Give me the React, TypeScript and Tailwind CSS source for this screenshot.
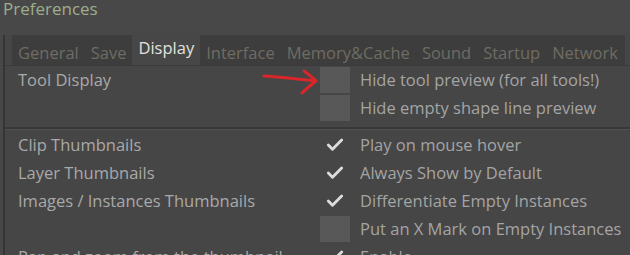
import { Check } from 'lucide-react';

const tabs = ['General', 'Save', 'Display', 'Interface', 'Memory&Cache', 'Sound', 'Startup', 'Network'];

function Box() {
  return <div className="h-[26px] w-[30px] bg-[#585858]" />;
}

function Tick() {
  return (
    <div className="flex h-[26px] w-[30px] items-center justify-center">
      <Check size={20} strokeWidth={3.4} className="text-[#dcdcdc]" />
    </div>
  );
}

function Row({ left, mark, label }: { left?: string; mark: 'box' | 'tick'; label: string }) {
  return (
    <div className="flex h-[28px] items-center">
      <div className="w-[315px] shrink-0 pl-[13px] text-[#a9a9a9]">{left}</div>
      {mark === 'box' ? <Box /> : <Tick />}
      <div className="pl-[10px] text-[#a4a4a4]">{label}</div>
    </div>
  );
}

export default function App() {
  return (
    <div className="relative h-[255px] w-[630px] overflow-hidden bg-[#484848] text-[16.5px] leading-none whitespace-nowrap font-['Open_Sans',sans-serif]">
      <div className="h-[35px] pl-[3px] text-[17px] leading-[17px] text-[#9fad8c]">Preferences</div>

      <div className="ml-[3px] border-l-2 border-[#353535] bg-[#464646]">
        {/* tab strip */}
        <div className="ml-[7px] mr-[5px] flex h-[30px] items-end bg-[#3d3d3d]">
          {tabs.map((t) =>
            t === 'Display' ? (
              <div key={t} className="-mt-[3px] flex h-[33px] items-center self-end bg-[#474747] px-[6px] pb-[1px] text-[#e2e2de]">
                {t}
              </div>
            ) : (
              <div key={t} className="flex h-[30px] items-center px-[6px] pt-[7px] text-[#6f6c63]">
                {t}
              </div>
            ),
          )}
        </div>
        <div className="h-px bg-[#3a3a3a]" />

        {/* tool display */}
        <div className="pb-[5px]">
          <div className="relative">
            <Row left="Tool Display" mark="box" label="Hide tool preview (for all tools!)" />
            <svg className="absolute left-[255px] top-[2px]" width="60" height="28" viewBox="0 0 60 28">
              <path d="M4 8 C20 9 38 11 55 13" stroke="#d8262a" strokeWidth="3" fill="none" strokeLinecap="round" />
              <path d="M44 3 C48 6 52 9 56 13 C51 17 46 21 42 25" stroke="#d8262a" strokeWidth="3" fill="none" strokeLinecap="round" strokeLinejoin="round" />
            </svg>
          </div>
          <Row mark="box" label="Hide empty shape line preview" />
        </div>

        <div className="h-[2px] bg-[#383838]" />
        <div className="h-px bg-[#505050]" />

        <div className="pt-px">
          <Row left="Clip Thumbnails" mark="tick" label="Play on mouse hover" />
          <Row left="Layer Thumbnails" mark="tick" label="Always Show by Default" />
          <Row left="Images / Instances Thumbnails" mark="tick" label="Differentiate Empty Instances" />
          <Row mark="box" label="Put an X Mark on Empty Instances" />
          <Row left="Pan and zoom from the thumbnail" mark="tick" label="Enable" />
        </div>
      </div>
    </div>
  );
}
